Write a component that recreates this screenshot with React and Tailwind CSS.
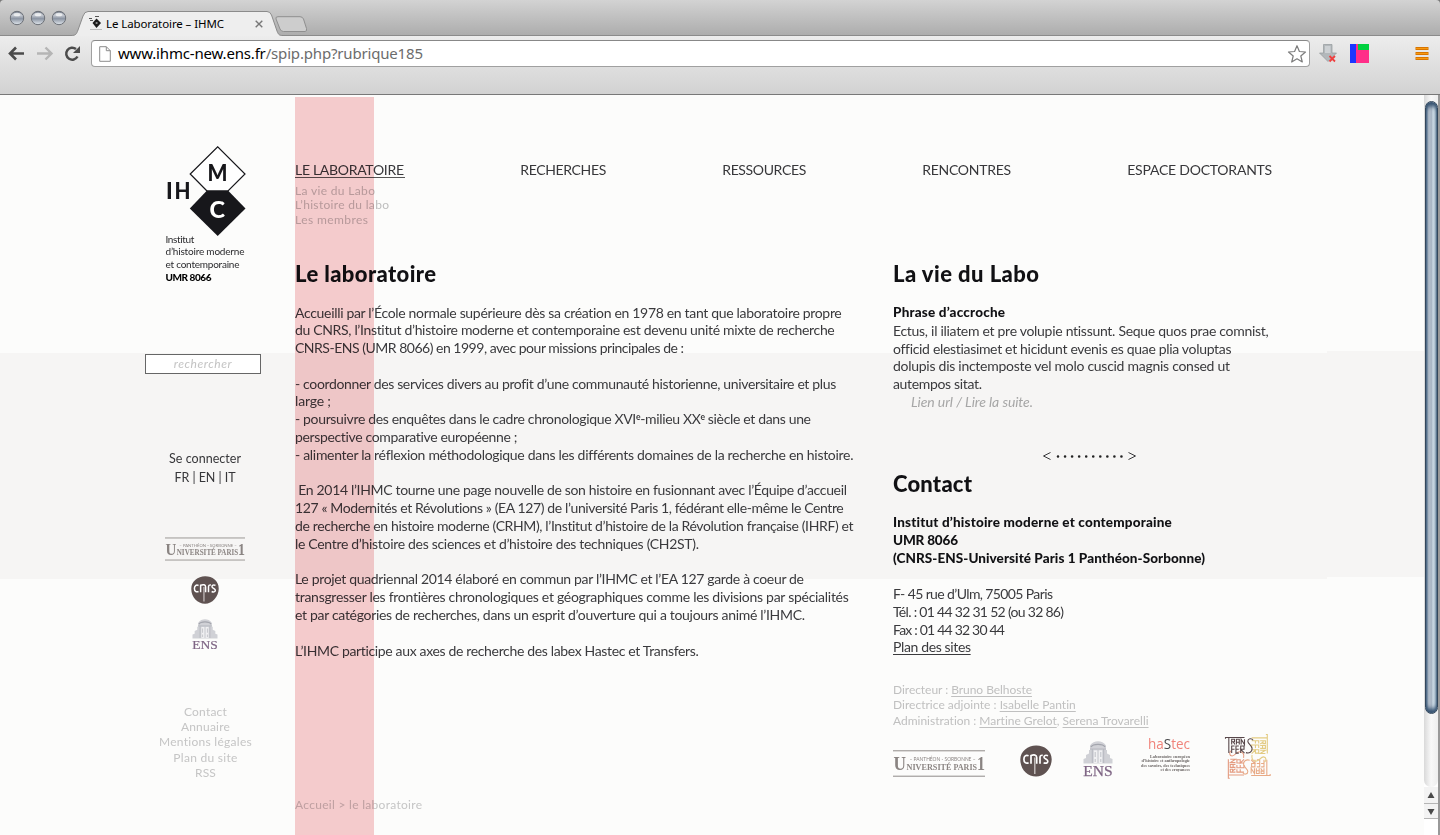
import { useLayoutEffect, useRef, useState } from "react";

// One line of text whose tracking is adjusted so that it spans `w` pixels.
function Fit({ w, className = "", children }) {
  const ref = useRef(null);
  const [spacing, setSpacing] = useState(0);
  useLayoutEffect(() => {
    const el = ref.current;
    const count = el.textContent.length;
    const natural = el.getBoundingClientRect().width - spacing * count;
    setSpacing((w - natural) / Math.max(1, count - 1));
  }, [w]);
  return (
    <span className="block">
      <span
        ref={ref}
        className={"inline-block whitespace-pre align-top " + className}
        style={{ letterSpacing: spacing + "px" }}
      >
        {children}
      </span>
    </span>
  );
}

function UniLogo({ className }) {
  return (
    <svg viewBox="0 0 92 27" className={"overflow-visible " + className}>
      <path d="M0 .8H92M0 26.2H92" stroke="#8f8a88" strokeWidth="1" />
      <g fill="#8a8482" fontFamily="Liberation Serif, serif" fontWeight="700">
        <text x="0.5" y="20" fontSize="19" textLength="12.5" lengthAdjust="spacingAndGlyphs">U</text>
        <text x="13.5" y="20" fontSize="8.6" textLength="45" lengthAdjust="spacingAndGlyphs">NIVERSITÉ</text>
        <text x="60.5" y="20" fontSize="8.6" textLength="23.5" lengthAdjust="spacingAndGlyphs">PARIS</text>
        <text x="84" y="20" fontSize="19" textLength="8" lengthAdjust="spacingAndGlyphs">1</text>
      </g>
      <text x="16.5" y="11.2" fontSize="5" fill="#8a8482" fontFamily="Lato, sans-serif" textLength="66" lengthAdjust="spacingAndGlyphs">– PANTHÉON - SORBONNE –</text>
    </svg>
  );
}

function CnrsLogo({ className }) {
  return (
    <svg viewBox="0 0 32 32" className={className}>
      <path d="M16 .4C24 .2 31.8 5.5 31.7 14.500C31.500 24 24 31.700 16 31.600C7.500 31.600.3 24.500.3 14.500C.3 6 8 .6 16 .4Z" fill="#5f5251" />
      <g fill="none" stroke="#fff" strokeWidth="1.700">
        <path d="M8.600 10.800C6 9.700 3.900 11 3.900 14.200C3.900 17.500 6 18.900 8.600 17.700" />
        <path d="M11 18.700V10.500C14 9.400 16.700 9.800 16.700 12.500V18.700" />
        <path d="M20 18.700V12.500C20 10.700 21 10 22.700 10.300" />
        <path d="M28 10.700C25.700 9.700 23.900 10.500 24 12.200C24.100 14 27.800 14.200 27.800 16.200C27.800 18.400 25.500 18.600 23.600 17.700" />
      </g>
      <path d="M14.800 12.500V29" stroke="#cfc9c8" strokeWidth="1.300" />
    </svg>
  );
}

function EnsLogo({ className }) {
  return (
    <svg viewBox="0 0 30 36" className={"overflow-visible " + className}>
      <path d="M.5 22.500V18L3 17V14L6 12.500V9H7V4.500C9 1.500 12 .3 15 .3S21 1.500 23 4.500V9H24V12.500L27 14V17L29.500 18V22.500Z" fill="#d0d1d6" />
      <path d="M8 6C10 2.500 20 2.500 22 6" fill="none" stroke="#a3a5ad" strokeWidth="1.400" />
      <path d="M7 8H23M9.300 8V22M20.700 8V22" stroke="#b4b6bd" strokeWidth=".9" />
      <path d="M10.800 9.300H19.200V22H10.800Z" fill="#f0f0f2" />
      <path d="M15 9V22M12.200 11V16M17.800 11V16M12.200 18V21M17.800 18V21" stroke="#b3b5bc" strokeWidth=".8" />
      <text x="0.200" y="35.300" fontSize="15.500" fill="#7f6685" fontFamily="Liberation Serif, serif" textLength="29.500" lengthAdjust="spacingAndGlyphs" stroke="#7f6685" strokeWidth=".25">ENS</text>
    </svg>
  );
}

function HastecLogo() {
  return (
    <svg viewBox="0 0 52 36" className="h-9 w-[52px] overflow-visible">
      <text x="8" y="12" fontSize="14" fontFamily="Open Sans, sans-serif" fill="#f0837a" textLength="42" lengthAdjust="spacingAndGlyphs">
        ha<tspan fill="#4a4a4c">S</tspan>tec
      </text>
      <g fontFamily="Liberation Serif, serif" fontWeight="700" fontSize="4.300" fill="#6a6564">
        <text x="10" y="21" textLength="40">Laboratoire européen</text>
        <text x="1.500" y="25.300" textLength="48.500">d’histoire et anthropologie</text>
        <text x="1" y="29.500" textLength="49">des savoirs, des techniques</text>
        <text x="20.500" y="33.800" textLength="29.500">et des croyances</text>
      </g>
    </svg>
  );
}

const LETTERS = "M0 3V1.500H20M3.500 1.500V18M6.500 9V3.500H9.500V6H6.500M8 6L10 9M11.500 9V3.500H14.500V9M11.500 6.500H14.500M16.500 9V3.500L20 9V3.500M9.500 10.500H6.500V18M6.500 14H9.500M14 10.500H11V18H14M11 14H14M16 18V10.500H19.500V14H16L20 18";
const LOOP = "M29 4.500C27.500 2 23.500 2.500 23.500 5.500C23.500 8.500 28 10 28 13.500C28 17 25 18.500 21.500 17.500";

function TransfersLogo() {
  return (
    <svg viewBox="0 0 47 43" className="h-[43px] w-[47px] overflow-visible">
      <g fill="none" strokeWidth="1.150" transform="translate(1.500 1) scale(.95)">
        <g stroke="#e49b80" transform="translate(1.500 44.500) rotate(-90)"><path d={LETTERS} /><path d={LOOP} /></g>
        <g stroke="#e8aa86" transform="translate(47 43)  rotate(180)"><path d={LETTERS} /><path d={LOOP} /></g>
        <g stroke="#e3cb82" transform="translate(45.500 -1.500) rotate(90)"><path d={LETTERS} /><path d={LOOP} /></g>
        <g stroke="#57474a"><path d={LETTERS} /><path d={LOOP} /></g>
      </g>
    </svg>
  );
}

function IhmcLogo() {
  return (
    <svg viewBox="0 0 80 91" className="h-[91px] w-[80px]">
      <path d="M41 45L24.200 28L51.700.8L79 28L62 45Z" fill="#fff" stroke="#17171b" strokeWidth="1.200" />
      <path d="M41 44.500H62L79.500 62.500L51.700 90L23.800 62.500Z" fill="#17171b" />
      <g fontFamily="Lato, sans-serif" fontWeight="900" fontSize="22" fill="#17171b">
        <text x="0" y="53">I</text>
        <text x="8.600" y="53" textLength="16" lengthAdjust="spacingAndGlyphs">H</text>
        <text x="41.500" y="35" textLength="20" lengthAdjust="spacingAndGlyphs">M</text>
        <text x="43.500" y="71.500" fill="#fff" textLength="15.500" lengthAdjust="spacingAndGlyphs" fontSize="23">C</text>
      </g>
    </svg>
  );
}

function TrafficLight() {
  return (
    <svg viewBox="0 0 16 16" className="h-4 w-4">
      <defs>
        <linearGradient id="bead" x1="0" y1="0" x2="0" y2="1">
          <stop offset="0" stopColor="#6d7684" />
          <stop offset=".3" stopColor="#c3c8d0" />
          <stop offset=".55" stopColor="#8b94a2" />
          <stop offset="1" stopColor="#e4eaf0" />
        </linearGradient>
      </defs>
      <circle cx="8" cy="8" r="6.700" fill="url(#bead)" stroke="#6d7178" strokeWidth="1" />
      <ellipse cx="8" cy="4.500" rx="3.500" ry="1.800" fill="#fff" opacity=".7" />
    </svg>
  );
}

function TabStrip() {
  return (
    <div className="flex h-9 items-start rounded-t border-b border-[#8b8b8b] bg-gradient-to-b from-[#d3d3d3] to-[#adadad]">
      <div className="flex gap-[5px] pt-[10px] pl-[9px]">
        <TrafficLight />
        <TrafficLight />
        <TrafficLight />
      </div>
      <div className="relative ml-1 h-9 w-[212px]">
        <svg viewBox="0 0 212 36" className="absolute inset-0 h-9 w-[212px]">
          <path d="M0 35.500C5 35.500 5.500 34 7 30L12 16Q13.500 11.500 17 11.500H196Q199 11.500 200.500 15L206 31C207.500 35 208.500 35.500 212 35.500V37H0Z" fill="#eeeeee" stroke="#8b8b8b" />
        </svg>
        <div className="relative flex h-9 items-start pt-[15px] pl-[17px]">
          <svg viewBox="0 0 16 16" className="h-4 w-4">
            <path d="M8.500 3.500L13 8L8.500 13L4.500 8Z" fill="#1b1b1b" />
            <path d="M7 1.500H11M1 3.500H4M2 5.500H5" stroke="#555" strokeWidth="1" />
            <path d="M2 14.500H14" stroke="#bbb" strokeWidth="1" />
            <path d="M7.700 8H9.500" stroke="#fff" />
          </svg>
          <div className="ml-[2px] h-[18px] font-['Noto_Sans',sans-serif] text-[11.500px] leading-[18px] text-black">
            <Fit w={118}>Le Laboratoire – IHMC</Fit>
          </div>
          <svg viewBox="0 0 8 8" className="mt-[5px] ml-[31px] h-2 w-2">
            <path d="M.7.7L7.300 7.300M7.300.7L.7 7.300" stroke="#777" strokeWidth="1.400" />
          </svg>
        </div>
      </div>
      <svg viewBox="0 0 34 17" className="-ml-[9px] mt-4 h-[17px] w-[34px]">
        <path d="M4 .7H26Q28.500.7 29.500 3L32.500 12.500Q33.200 15.500 31 15.500H9.500Q7 15.500 6 13L2 3Q1.300.7 4 .7Z" fill="#cdcdcd" stroke="#8f8f8f" />
      </svg>
    </div>
  );
}

function Toolbar() {
  return (
    <div className="flex h-[59px] items-start border-b border-[#787878] bg-gradient-to-b from-[#ededed] to-[#d2d2d2] pt-1">
      <svg viewBox="0 0 80 28" className="h-7 w-20" fill="none">
        <path d="M24 13.500H11M16 7.500L10 13.500L16 19.500" stroke="#4b4b4b" strokeWidth="2.600" />
        <path d="M37 13.500H50.500M45.500 7.500L51.500 13.500L45.500 19.500" stroke="#b5b5b5" strokeWidth="2.400" />
        <path d="M77.500 16.500A6 6 0 1 1 76 9" stroke="#4b4b4b" strokeWidth="2.500" />
        <path d="M80 6V13H73Z" fill="#4b4b4b" />
      </svg>
      <div className="ml-[11px] flex h-[27px] w-[1219px] items-start rounded border border-[#a0a0a0] border-t-[#888] bg-white">
        <svg viewBox="0 0 12 16" className="mt-[5px] ml-[7px] h-4 w-3">
          <path d="M.7.700H7.300L11.300 4.700V15.300H.7ZM7.300.7V4.700H11.300" fill="#fff" stroke="#8c8c8c" />
        </svg>
        <div className="ml-[7px] font-['Noto_Sans',sans-serif] text-[15px] leading-[25px] text-black">
          <Fit w={305}>
            www.ihmc-new.ens.fr<span className="text-[#6c6c6c]">/spip.php?rubrique185</span>
          </Fit>
        </div>
        <svg viewBox="0 0 20 20" className="mt-[3px] mr-[2px] ml-auto h-5 w-5">
          <path d="M10 1.700L12.400 7.500L18.500 8L13.800 12L15.300 18L10 14.800L4.700 18L6.200 12L1.500 8L7.600 7.500Z" fill="#fff" stroke="#7c7c7c" strokeWidth="1.200" strokeLinejoin="round" />
        </svg>
      </div>
      <svg viewBox="0 0 18 20" className="mt-[3px] ml-[9px] h-5 w-[18px]">
        <path d="M4.500 1.500H13V10H17.500L9 18.500L.500 10H4.500Z" fill="#b3b8bb" stroke="#94999c" strokeWidth=".7" />
        <path d="M6 3H11.500V10H6Z" fill="#cdd1d4" />
        <path d="M10.500 13L16 18.500M16 13L10.500 18.500" stroke="#ee3f3f" strokeWidth="1.800" />
      </svg>
      <svg viewBox="0 0 19 19" className="mt-1 ml-[13px] h-[19px] w-[19px]">
        <path d="M0 0H19V19H0Z" fill="#ff2e88" />
        <path d="M0 0H6V19H0Z" fill="#1b35ff" />
        <path d="M8 0H19V6H8Z" fill="#00d13f" />
      </svg>
      <svg viewBox="0 0 14 14" className="mt-[7px] ml-[46px] h-[14px] w-[14px]">
        <path d="M.500 1.500H13.500M.500 6.500H13.500M.500 11.500H13.500" stroke="#d87400" strokeWidth="3" />
        <path d="M1 1.500H13M1 6.500H13M1 11.500H13" stroke="#f79a10" strokeWidth="1" />
      </svg>
    </div>
  );
}

function Sidebar() {
  return (
    <aside className="ml-[145px] flex w-[120px] shrink-0 flex-col items-center pt-[51px]">
      <div className="pl-px"><IhmcLogo /></div>
      <div className="-mt-[4px] ml-px w-[80px] text-[10px] leading-[12.400px] text-[#2b2b2e]">
        <Fit w={29}>Institut</Fit>
        <Fit w={79}>d’histoire moderne</Fit>
        <Fit w={74}>et contemporaine</Fit>
        <div className="pt-px font-black text-black">
          <Fit w={46}>UMR 8066</Fit>
        </div>
      </div>
      <div className="mt-[70px] mr-1 flex h-5 w-[116px] items-center justify-center border border-[#666] bg-white text-[12px] leading-4 text-[#c3c3c3] italic">
        <Fit w={58}>rechercher</Fit>
      </div>
      <div className="mt-[75px] flex flex-col items-center text-[12.500px] leading-[19px] text-[#37373a]">
        <Fit w={72}>Se connecter</Fit>
        <Fit w={61}>FR | EN | IT</Fit>
      </div>
      <UniLogo className="mt-[50px] h-[24px] w-20" />
      <CnrsLogo className="mt-[15px] h-7 w-7" />
      <EnsLogo className="mt-[15px] h-[31px] w-[26px]" />
      <nav className="mt-[54px] ml-px flex flex-col items-center text-[12px] leading-[15.300px] text-[#c5c5c5]">
        <Fit w={43}>Contact</Fit>
        <Fit w={49}>Annuaire</Fit>
        <Fit w={93}>Mentions légales</Fit>
        <Fit w={64}>Plan du site</Fit>
        <Fit w={21}>RSS</Fit>
      </nav>
    </aside>
  );
}

function TopNav() {
  return (
    <nav className="flex h-[81px] justify-between text-[14px] leading-[18px] text-[#37373a]">
      <div className="w-[109px]">
        <div className="h-[17px] w-[110px] border-b border-[#555]">
          <Fit w={109}>LE LABORATOIRE</Fit>
        </div>
        <div className="pt-[6px] text-[12px] leading-[14.300px] text-[#bdbdbd]">
          <Fit w={80}>La vie du Labo</Fit>
          <Fit w={94}>L’histoire du labo</Fit>
          <Fit w={73}>Les membres</Fit>
        </div>
      </div>
      <Fit w={86}>RECHERCHES</Fit>
      <Fit w={84}>RESSOURCES</Fit>
      <Fit w={89}>RENCONTRES</Fit>
      <Fit w={145}>ESPACE DOCTORANTS</Fit>
    </nav>
  );
}

const sup = <span className="relative -top-1 text-[8.500px] leading-none font-bold">e</span>;

function Article() {
  return (
    <article className="w-[598px] shrink-0">
      <h1 className="text-[22px] leading-7 font-black text-[#111114]">
        <Fit w={141}>Le laboratoire</Fit>
      </h1>
      <div className="mt-[15.500px] flex flex-col gap-[17.800px] text-[14px] leading-[17.800px] text-[#3a3a3d]">
        <div>
          <Fit w={547}>Accueilli par l’École normale supérieure dès sa création en 1978 en tant que laboratoire propre</Fit>
          <Fit w={540}>du CNRS, l’Institut d’histoire moderne et contemporaine est devenu unité mixte de recherche</Fit>
          <Fit w={389}>CNRS-ENS (UMR 8066) en 1999, avec pour missions principales de :</Fit>
        </div>
        <div>
          <Fit w={541}>- coordonner des services divers au profit d’une communauté historienne, universitaire et plus</Fit>
          <Fit w={36}>large ;</Fit>
          <Fit w={516}>- poursuivre des enquêtes dans le cadre chronologique XVI{sup}-milieu XX{sup} siècle et dans une</Fit>
          <Fit w={223}>perspective comparative européenne ;</Fit>
          <Fit w={558}>- alimenter la réflexion méthodologique dans les différents domaines de la recherche en histoire.</Fit>
        </div>
        <div>
          <Fit w={552}> En 2014 l’IHMC tourne une page nouvelle de son histoire en fusionnant avec l’Équipe d’accueil</Fit>
          <Fit w={549}>127 « Modernités et Révolutions » (EA 127) de l’université Paris 1, fédérant elle-même le Centre</Fit>
          <Fit w={559}>de recherche en histoire moderne (CRHM), l’Institut d’histoire de la Révolution française (IHRF) et</Fit>
          <Fit w={404}>le Centre d’histoire des sciences et d’histoire des techniques (CH2ST).</Fit>
        </div>
        <div>
          <Fit w={509}>Le projet quadriennal 2014 élaboré en commun par l’IHMC et l’EA 127 garde à coeur de</Fit>
          <Fit w={554}>transgresser les frontières chronologiques et géographiques comme les divisions par spécialités</Fit>
          <Fit w={510}>et par catégories de recherches, dans un esprit d’ouverture qui a toujours animé l’IHMC.</Fit>
        </div>
        <Fit w={404}>L’IHMC participe aux axes de recherche des labex Hastec et Transfers.</Fit>
      </div>
      <div className="mt-[138px] text-[12px] leading-4 text-[#c5c5c5]">
        <Fit w={127}>Accueil &gt; le laboratoire</Fit>
      </div>
    </article>
  );
}

const link = "underline decoration-1 underline-offset-2";

function Aside() {
  return (
    <section className="w-[380px] text-[14px] leading-[17.800px] text-[#3a3a3d]">
      <h2 className="text-[22px] leading-7 font-black text-[#111114]">
        <Fit w={146}>La vie du Labo</Fit>
      </h2>
      <div className="mt-4">
        <div className="font-black text-[#111114]"><Fit w={112} className="text-[13.500px]">Phrase d’accroche</Fit></div>
        <Fit w={376}>Ectus, il iliatem et pre volupie ntissunt. Seque quos prae comnist,</Fit>
        <Fit w={338}>officid elestiasimet et hicidunt evenis es quae plia voluptas</Fit>
        <Fit w={337}>dolupis dis inctemposte vel molo cuscid magnis consed ut</Fit>
        <Fit w={89}>autempos sitat.</Fit>
        <div className="pl-[18px] text-[#a6a6a6] italic"><Fit w={122}>Lien url / Lire la suite.</Fit></div>
      </div>
      <div className="mt-[36px] ml-[149px] flex h-[18px] w-[95px] items-center justify-between">
        <svg viewBox="0 0 95 10" className="h-[10px] w-[95px]">
          <path d="M8.500 1.500L1.500 5L8.500 8.500M86.500 1.500L93.500 5L86.500 8.500" fill="none" stroke="#37373a" />
          <path d="M16 5.500H82" stroke="#222" strokeWidth="2.600" strokeLinecap="round" strokeDasharray="0 7.050" />
        </svg>
      </div>
      <h2 className="mt-[5.500px] text-[22px] leading-7 font-black text-[#111114]">
        <Fit w={79}>Contact</Fit>
      </h2>
      <div className="mt-4 text-[13.500px] font-black text-[#111114]">
        <Fit w={279}>Institut d’histoire moderne et contemporaine</Fit>
        <Fit w={65}>UMR 8066</Fit>
        <Fit w={312}>(CNRS-ENS-Université Paris 1 Panthéon-Sorbonne)</Fit>
      </div>
      <div className="mt-[17.300px]">
        <Fit w={160}>F- 45 rue d’Ulm, 75005 Paris</Fit>
        <Fit w={171}>Tél. : 01 44 32 31 52 (ou 32 86)</Fit>
        <Fit w={112}>Fax : 01 44 32 30 44</Fit>
        <Fit w={78} className={link}>Plan des sites</Fit>
      </div>
      <div className="mt-[25.500px] text-[12px] leading-[15.500px] text-[#c0c0c0]">
        <Fit w={139}>Directeur : <span className={link}>Bruno Belhoste</span></Fit>
        <Fit w={183}>Directrice adjointe : <span className={link}>Isabelle Pantin</span></Fit>
        <Fit w={256}>Administration : <span className={link}>Martine Grelot</span>, <span className={link}>Serena Trovarelli</span></Fit>
      </div>
      <div className="mt-[7px] flex h-[43px] items-start">
        <UniLogo className="mt-[15px] h-[27px] w-[92px]" />
        <CnrsLogo className="mt-[10px] ml-[35px] h-8 w-8" />
        <EnsLogo className="mt-[6px] ml-[31px] h-9 w-[30px]" />
        <div className="mt-[2px] ml-[27px]"><HastecLogo /></div>
        <div className="ml-[32px]"><TransfersLogo /></div>
      </div>
    </section>
  );
}

function Scrollbar() {
  return (
    <div className="flex w-4 shrink-0 flex-col border-r-2 border-[#999] bg-white">
      <div className="flex h-[692px] flex-col rounded-b-full bg-gradient-to-r from-[#d9d9d9] via-[#f8f8f8] to-[#eeeeee] pt-[6px]">
        <div className="ml-px h-[613px] w-[13px] rounded-full border border-[#33475c] bg-[linear-gradient(90deg,#7f98b3_0%,#cdd3dc_20%,#b5bfcc_40%,#a4b1c1_48%,#d4e1ea_65%,#e3f1f8_85%,#8ca4b8_100%)] shadow-[inset_0_4px_4px_#33506f,inset_0_-4px_4px_#33506f]" />
      </div>
      <svg viewBox="0 0 14 32" className="h-8 w-[14px]">
        <path d="M0 0H14V32H0Z" fill="#f3f3f3" />
        <path d="M0 16.500H14M0 31.500H14" stroke="#b5b5b5" />
        <path d="M3.500 11L7 5L10.500 11ZM3.500 22L7 28L10.500 22Z" fill="#4a4a4a" />
      </svg>
    </div>
  );
}

export default function App() {
  return (
    <div className="flex h-[835px] w-[1440px] flex-col overflow-hidden bg-[#777] font-[Lato,sans-serif]">
      <TabStrip />
      <Toolbar />
      <div className="flex min-h-0 flex-1">
        <div className="relative isolate flex w-[1424px] bg-[#fcfcfb] bg-[linear-gradient(transparent_258px,#f6f5f4_258px,#f6f5f4_484px,transparent_484px),linear-gradient(transparent_256px,#f6f5f4_256px,#f6f5f4_482px,transparent_482px)] bg-[size:1327px_100%,97px_100%] bg-[position:0_0,1327px_0] bg-no-repeat">
          <Sidebar />
          <main className="ml-[30px] w-[977px] pt-[66px]">
            <TopNav />
            <div className="mt-[18px] flex">
              <Article />
              <Aside />
            </div>
          </main>
          <div className="pointer-events-none absolute top-[2px] bottom-0 left-[295px] w-[79px] bg-[#f7ced0] mix-blend-multiply" />
        </div>
        <Scrollbar />
      </div>
    </div>
  );
}
